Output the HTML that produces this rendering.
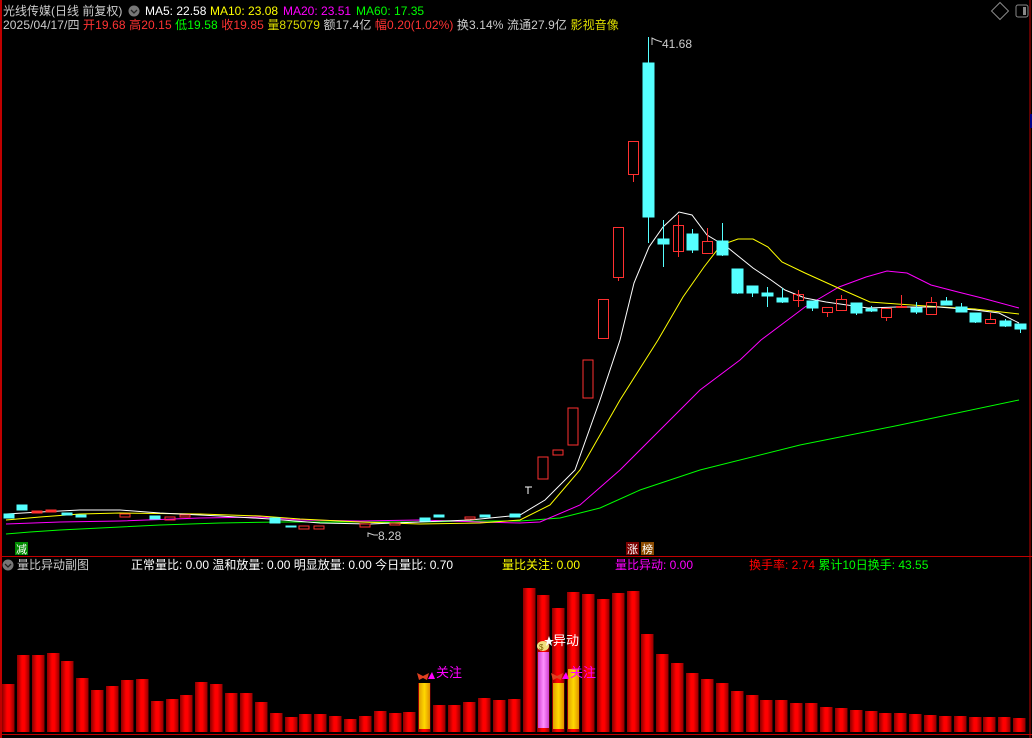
<!DOCTYPE html>
<html><head><meta charset="utf-8"><style>
body{margin:0;background:#000;width:1032px;height:738px;overflow:hidden;position:relative;font-family:"Liberation Sans","Noto Sans CJK SC",sans-serif;}
.t{position:absolute;font-size:12px;white-space:nowrap;line-height:14px}
</style></head><body>
<svg width="1032" height="738" style="position:absolute;left:0;top:0">
<defs><linearGradient id="g" x1="0" x2="1"><stop offset="0" stop-color="#8a0000"/><stop offset=".4" stop-color="#ff0000"/><stop offset=".6" stop-color="#ff0000"/><stop offset="1" stop-color="#900000"/></linearGradient>
<linearGradient id="y" x1="0" x2="1"><stop offset="0" stop-color="#e0a000"/><stop offset=".5" stop-color="#ffd800"/><stop offset="1" stop-color="#e09000"/></linearGradient>
<linearGradient id="p" x1="0" x2="1"><stop offset="0" stop-color="#d040d0"/><stop offset=".5" stop-color="#ff90ff"/><stop offset="1" stop-color="#d040d0"/></linearGradient></defs>
<line x1="1" y1="0" x2="1" y2="738" stroke="#c00000" stroke-width="2"/>
<line x1="1030" y1="0" x2="1030" y2="738" stroke="#c00000" stroke-width="1"/>
<line x1="0" y1="556.5" x2="1032" y2="556.5" stroke="#c00000"/>
<line x1="0" y1="734.5" x2="1032" y2="734.5" stroke="#c00000"/>
<rect x="1030" y="114" width="2" height="14" fill="#00008a"/>
<rect x="994" y="5" width="12" height="12" fill="none" stroke="#888" transform="rotate(45 1000 11)"/>
<rect x="1016" y="5" width="12" height="12" rx="2" fill="none" stroke="#888"/><rect x="1023" y="7" width="3" height="8" fill="#888"/>
<polyline fill="none" stroke="#00ff00" stroke-width="1" points="6,534 30,532 60,530 100,528 160,525 220,523 280,522 350,522 420,522 480,521 520,521 560,518 600,508 640,490 700,470 800,445 900,425 1019,400"/>
<polyline fill="none" stroke="#ff00ff" stroke-width="1" points="6,524 60,522 120,521 200,518 260,517 300,520 360,521 420,520 480,522 520,523 540,522 580,505 620,470 660,430 700,390 740,360 761,340 805,307 839,287 866,277 887,271 907,273 931,285 958,292 982,298 1019,308"/>
<polyline fill="none" stroke="#ffff00" stroke-width="1" points="6,520 40,517 80,514 120,513 200,514 260,516 300,519 360,522 420,524 480,523 520,520 550,505 580,470 620,400 658,340 683,297 704,267 721,245 738,239 753,239 768,247 782,262 805,273 836,287 870,302 897,304 941,307 975,309 1019,314"/>
<polyline fill="none" stroke="#ffffff" stroke-width="1" points="6,514 40,512 80,510 120,510 160,513 220,516 270,519 320,523 370,524 420,522 470,520 520,515 545,500 575,470 600,400 620,340 634,283 649,247 663,227 679,212 692,215 707,235 727,247 753,268 771,280 785,290 805,298 826,302 868,308 897,307 938,307 975,310 999,313 1019,323"/>
<g fill="#55ffff" stroke="#55ffff">
<rect x="4" y="514" width="10" height="4"/><rect x="17" y="505" width="10" height="5"/><rect x="62" y="513" width="10" height="2"/><rect x="76" y="515" width="10" height="2"/><rect x="150" y="516" width="10" height="3"/><rect x="270" y="518" width="10" height="5"/><rect x="286" y="526" width="10" height="1"/><rect x="420" y="518" width="10" height="3"/><rect x="434" y="515" width="10" height="2"/><rect x="480" y="515" width="10" height="2"/><rect x="510" y="514" width="10" height="3"/>
</g>
<g fill="none" stroke="#ff3030">
<rect x="32" y="511" width="10" height="2" fill="#ff3030"/><rect x="46" y="510" width="10" height="2" fill="#ff3030"/><rect x="120" y="514" width="10" height="3"/><rect x="165" y="517" width="10" height="3"/><rect x="180" y="515" width="10" height="2"/><rect x="299" y="526" width="10" height="3"/><rect x="314" y="526" width="10" height="3"/><rect x="360" y="524" width="10" height="3"/><rect x="390" y="523" width="10" height="2"/><rect x="465" y="517" width="10" height="2"/>
<rect x="538" y="457" width="10" height="22"/><rect x="553" y="450" width="10" height="5"/><rect x="568" y="408" width="10" height="37"/><rect x="583" y="360" width="10" height="38"/>
</g>
<line x1="528" y1="487" x2="528" y2="494" stroke="#fff"/><line x1="525" y1="487" x2="532" y2="487" stroke="#fff"/>
<g stroke="#ff3030" fill="none">
<rect x="598.5" y="299.5" width="10" height="39"/><rect x="613.5" y="227.5" width="10" height="50"/><line x1="618.5" y1="278" x2="618.5" y2="281"/>
<rect x="628.5" y="141.5" width="10" height="33"/><line x1="633.5" y1="175" x2="633.5" y2="182"/>
<rect x="673.5" y="225.5" width="10" height="26"/><line x1="678.5" y1="215" x2="678.5" y2="257"/>
<rect x="702.5" y="241.5" width="10" height="12"/><line x1="707.5" y1="228" x2="707.5" y2="241"/>
<rect x="793.5" y="294.5" width="10" height="6"/><line x1="798.5" y1="290" x2="798.5" y2="307"/>
<rect x="822.5" y="307.5" width="10" height="5"/><line x1="827.5" y1="313" x2="827.5" y2="317"/>
<rect x="836.5" y="299.5" width="10" height="11"/><line x1="841.5" y1="295" x2="841.5" y2="299"/>
<rect x="881.5" y="308.5" width="10" height="9"/><line x1="886.5" y1="318" x2="886.5" y2="321"/>
<rect x="896.5" y="306.5" width="10" height="1"/><line x1="901.5" y1="295" x2="901.5" y2="307"/>
<rect x="926.5" y="302.5" width="10" height="12"/><line x1="931.5" y1="297" x2="931.5" y2="302"/>
<rect x="985.5" y="319.5" width="10" height="4"/><line x1="990.5" y1="313" x2="990.5" y2="319"/>
</g>
<g stroke="#55ffff" fill="#55ffff">
<line x1="648.5" y1="37" x2="648.5" y2="243"/><rect x="643" y="63" width="11" height="154"/>
<line x1="663.5" y1="220" x2="663.5" y2="267"/><rect x="658" y="239" width="11" height="5"/>
<line x1="692.5" y1="229" x2="692.5" y2="253"/><rect x="687" y="234" width="11" height="16"/>
<line x1="722.5" y1="223" x2="722.5" y2="256"/><rect x="717" y="241" width="11" height="14"/>
<line x1="737.5" y1="269" x2="737.5" y2="294"/><rect x="732" y="269" width="11" height="24"/>
<line x1="752.5" y1="286" x2="752.5" y2="297"/><rect x="747" y="286" width="11" height="7"/>
<line x1="767.5" y1="287" x2="767.5" y2="307"/><rect x="762" y="293" width="11" height="3"/>
<line x1="782.5" y1="288" x2="782.5" y2="303"/><rect x="777" y="298" width="11" height="4"/>
<line x1="812.5" y1="301" x2="812.5" y2="311"/><rect x="807" y="301" width="11" height="7"/>
<line x1="856.5" y1="303" x2="856.5" y2="315"/><rect x="851" y="303" width="11" height="10"/>
<line x1="871.5" y1="306" x2="871.5" y2="312"/><rect x="866" y="309" width="11" height="2"/>
<line x1="916.5" y1="302" x2="916.5" y2="314"/><rect x="911" y="308" width="11" height="4"/>
<line x1="946.5" y1="297" x2="946.5" y2="305"/><rect x="941" y="301" width="11" height="4"/>
<line x1="961.5" y1="303" x2="961.5" y2="312"/><rect x="956" y="307" width="11" height="5"/>
<line x1="975.5" y1="313" x2="975.5" y2="323"/><rect x="970" y="313" width="11" height="9"/>
<line x1="1005.5" y1="319" x2="1005.5" y2="327"/><rect x="1000" y="321" width="11" height="5"/>
<line x1="1020.5" y1="324" x2="1020.5" y2="333"/><rect x="1015" y="324" width="11" height="5"/>
</g>
<polyline points="652,45 652,38 656,40 662,42" fill="none" stroke="#ccc"/>
<text x="662" y="48" fill="#ccc" font-size="12" font-family="Liberation Sans">41.68</text>
<polyline points="368,537 368,533 374,535 378,535" fill="none" stroke="#ccc"/>
<text x="378" y="540" fill="#ccc" font-size="12" font-family="Liberation Sans">8.28</text>
<g fill="url(#g)">
<rect x="2" y="684" width="12.5" height="48"/><rect x="17" y="655" width="12.5" height="77"/><rect x="32" y="655" width="12.5" height="77"/><rect x="47" y="653" width="12.5" height="79"/><rect x="61" y="661" width="12.5" height="71"/><rect x="76" y="678" width="12.5" height="54"/><rect x="91" y="690" width="12.5" height="42"/><rect x="106" y="686" width="12.5" height="46"/><rect x="121" y="680" width="12.5" height="52"/><rect x="136" y="679" width="12.5" height="53"/>
<rect x="151" y="701" width="12.5" height="31"/><rect x="166" y="699" width="12.5" height="33"/><rect x="180" y="695" width="12.5" height="37"/><rect x="195" y="682" width="12.5" height="50"/><rect x="210" y="684" width="12.5" height="48"/><rect x="225" y="693" width="12.5" height="39"/><rect x="240" y="693" width="12.5" height="39"/><rect x="255" y="702" width="12.5" height="30"/><rect x="270" y="713" width="12.5" height="19"/><rect x="285" y="717" width="12.5" height="15"/>
<rect x="299" y="714" width="12.5" height="18"/><rect x="314" y="714" width="12.5" height="18"/><rect x="329" y="716" width="12.5" height="16"/><rect x="344" y="719" width="12.5" height="13"/><rect x="359" y="716" width="12.5" height="16"/><rect x="374" y="711" width="12.5" height="21"/><rect x="389" y="713" width="12.5" height="19"/><rect x="403" y="712" width="12.5" height="20"/><rect x="418" y="683" width="12.5" height="49"/><rect x="433" y="705" width="12.5" height="27"/>
<rect x="448" y="705" width="12.5" height="27"/><rect x="463" y="702" width="12.5" height="30"/><rect x="478" y="698" width="12.5" height="34"/><rect x="493" y="700" width="12.5" height="32"/><rect x="508" y="699" width="12.5" height="33"/><rect x="523" y="588" width="12.5" height="144"/><rect x="537" y="595" width="12.5" height="137"/><rect x="552" y="608" width="12.5" height="124"/><rect x="567" y="592" width="12.5" height="140"/><rect x="582" y="594" width="12.5" height="138"/>
<rect x="597" y="599" width="12.5" height="133"/><rect x="612" y="593" width="12.5" height="139"/><rect x="627" y="591" width="12.5" height="141"/><rect x="641" y="634" width="12.5" height="98"/><rect x="656" y="654" width="12.5" height="78"/><rect x="671" y="663" width="12.5" height="69"/><rect x="686" y="673" width="12.5" height="59"/><rect x="701" y="679" width="12.5" height="53"/><rect x="716" y="683" width="12.5" height="49"/><rect x="731" y="691" width="12.5" height="41"/>
<rect x="746" y="695" width="12.5" height="37"/><rect x="760" y="700" width="12.5" height="32"/><rect x="775" y="700" width="12.5" height="32"/><rect x="790" y="703" width="12.5" height="29"/><rect x="805" y="703" width="12.5" height="29"/><rect x="820" y="707" width="12.5" height="25"/><rect x="835" y="708" width="12.5" height="24"/><rect x="850" y="710" width="12.5" height="22"/><rect x="865" y="711" width="12.5" height="21"/><rect x="879" y="713" width="12.5" height="19"/>
<rect x="894" y="713" width="12.5" height="19"/><rect x="909" y="714" width="12.5" height="18"/><rect x="924" y="715" width="12.5" height="17"/><rect x="939" y="716" width="12.5" height="16"/><rect x="954" y="716" width="12.5" height="16"/><rect x="969" y="717" width="12.5" height="15"/><rect x="983" y="717" width="12.5" height="15"/><rect x="998" y="717" width="12.5" height="15"/><rect x="1013" y="718" width="12.5" height="14"/>
</g>
<rect x="419" y="683" width="11" height="46" fill="url(#y)"/>
<rect x="538" y="652" width="11" height="76" fill="url(#p)"/>
<rect x="553" y="683" width="11" height="46" fill="url(#y)"/>
<rect x="568" y="669" width="11" height="60" fill="url(#y)"/>
<g><path d="M417,673 l6,3 l6,-3 l-2,7 l-4,-2 l-4,2z" fill="#e04020"/><polygon points="428,679 432,672 435,679" fill="#ff00ff"/></g>
<g><path d="M551,673 l6,3 l6,-3 l-2,7 l-4,-2 l-4,2z" fill="#e04020"/><polygon points="562,679 566,672 569,679" fill="#ff00ff"/></g>
<ellipse cx="543" cy="646" rx="6" ry="5" fill="#f0e080"/><text x="539" y="650" font-size="8" fill="#806000">$</text>
<polygon points="549,636 550.5,640 554,640 551,642 552,646 549,643.5 546,646 547,642 544,640 547.5,640" fill="#fff"/>
<text x="436" y="677" fill="#ff00ff" font-size="13" font-family="Noto Sans CJK SC">关注</text>
<text x="570" y="677" fill="#ff00ff" font-size="13" font-family="Noto Sans CJK SC">关注</text>
<text x="553" y="645" fill="#fff" font-size="13" font-family="Noto Sans CJK SC">异动</text>
<rect x="15" y="542" width="13" height="13" fill="#008800"/><text x="16" y="553" fill="#fff" font-size="11" font-family="Noto Sans CJK SC">减</text>
<rect x="626" y="542" width="13" height="13" fill="#7a0000"/><text x="627" y="553" fill="#fff" font-size="11" font-family="Noto Sans CJK SC">涨</text>
<rect x="641" y="542" width="13" height="13" fill="#8a4a00"/><text x="642" y="553" fill="#fff" font-size="11" font-family="Noto Sans CJK SC">榜</text>
<circle cx="134" cy="11" r="5.5" fill="#777"/><path d="M131,10 l3,3 l3,-3" stroke="#222" fill="none" stroke-width="1.3"/>
<circle cx="8" cy="565" r="5.5" fill="#777"/><path d="M5,564 l3,3 l3,-3" stroke="#222" fill="none" stroke-width="1.3"/>
</svg>
<div class="t" style="left:3px;top:4px;color:#ccc">光线传媒(日线 前复权)</div>
<div class="t" style="left:145px;top:4px;color:#fff">MA5: 22.58</div>
<div class="t" style="left:210px;top:4px;color:#ff0">MA10: 23.08</div>
<div class="t" style="left:283px;top:4px;color:#f0f">MA20: 23.51</div>
<div class="t" style="left:356px;top:4px;color:#0f0">MA60: 17.35</div>
<div class="t" style="left:3px;top:18px;color:#ccc;letter-spacing:0.1px">2025/04/17/四 <span style="color:#f33">开19.68 高20.15</span> <span style="color:#0f0">低19.58</span> <span style="color:#f33">收19.85</span> <span style="color:#dd0">量875079</span> 额17.4亿 <span style="color:#f33">幅0.20(1.02%)</span> 换3.14% 流通27.9亿 <span style="color:#dd0">影视音像</span></div>
<div class="t" style="left:17px;top:558px;color:#ccc">量比异动副图</div>
<div class="t" style="left:131px;top:558px;color:#fff">正常量比: 0.00 温和放量: 0.00 明显放量: 0.00 今日量比: 0.70</div>
<div class="t" style="left:502px;top:558px;color:#ff0">量比关注: 0.00</div>
<div class="t" style="left:615px;top:558px;color:#f0f">量比异动: 0.00</div>
<div class="t" style="left:749px;top:558px;color:#f00">换手率: 2.74 <span style="color:#0f0">累计10日换手: 43.55</span></div>
</body></html>
